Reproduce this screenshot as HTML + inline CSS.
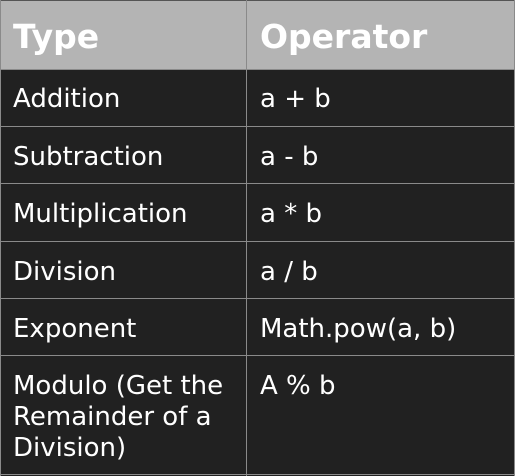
<!DOCTYPE html>
<html><head><style>
html,body{margin:0;padding:0;background:#212121;width:515px;height:476px;overflow:hidden;font-family:"DejaVu Sans",sans-serif;color:#fff}
.c{position:absolute;box-sizing:border-box;padding-left:13px;font-size:26px;white-space:nowrap}
.h{background:#b4b4b4}
.l{position:absolute;background:#8a8a8a}
</style></head><body>
<div class="c h" style="left:0;top:0;width:515px;height:69px;border-top:1px solid #555"></div>
<div class="c" style="left:0;top:18px;font-size:33px;font-weight:bold;line-height:38px">Type</div>
<div class="c" style="left:247px;top:18px;font-size:33px;font-weight:bold;line-height:38px">Operator</div>

<div class="l" style="left:246px;top:0;width:1px;height:476px"></div>
<div class="l" style="left:0;top:69px;width:515px;height:1px"></div>
<div class="l" style="left:0;top:126px;width:515px;height:1px"></div>
<div class="l" style="left:0;top:183px;width:515px;height:1px"></div>
<div class="l" style="left:0;top:241px;width:515px;height:1px"></div>
<div class="l" style="left:0;top:298px;width:515px;height:1px"></div>
<div class="l" style="left:0;top:355px;width:515px;height:1px"></div>
<div class="l" style="left:0;top:474px;width:515px;height:1px"></div>
<div class="l" style="left:0;top:0;width:1px;height:476px"></div>
<div class="l" style="left:514px;top:0;width:1px;height:476px"></div>

<div class="c" style="left:0;top:84px;line-height:31px">Addition</div>
<div class="c" style="left:247px;top:84px;line-height:31px">a + b</div>
<div class="c" style="left:0;top:142px;line-height:31px">Subtraction</div>
<div class="c" style="left:247px;top:142px;line-height:31px">a - b</div>
<div class="c" style="left:0;top:199px;line-height:31px">Multiplication</div>
<div class="c" style="left:247px;top:199px;line-height:31px">a * b</div>
<div class="c" style="left:0;top:257px;line-height:31px">Division</div>
<div class="c" style="left:247px;top:257px;line-height:31px">a / b</div>
<div class="c" style="left:0;top:314px;line-height:31px">Exponent</div>
<div class="c" style="left:247px;top:314px;line-height:31px">Math.pow(a, b)</div>
<div class="c" style="left:0;top:371px;line-height:31px">Modulo (Get the<br>Remainder of a<br>Division)</div>
<div class="c" style="left:247px;top:371px;line-height:31px">A % b</div>
</body></html>
